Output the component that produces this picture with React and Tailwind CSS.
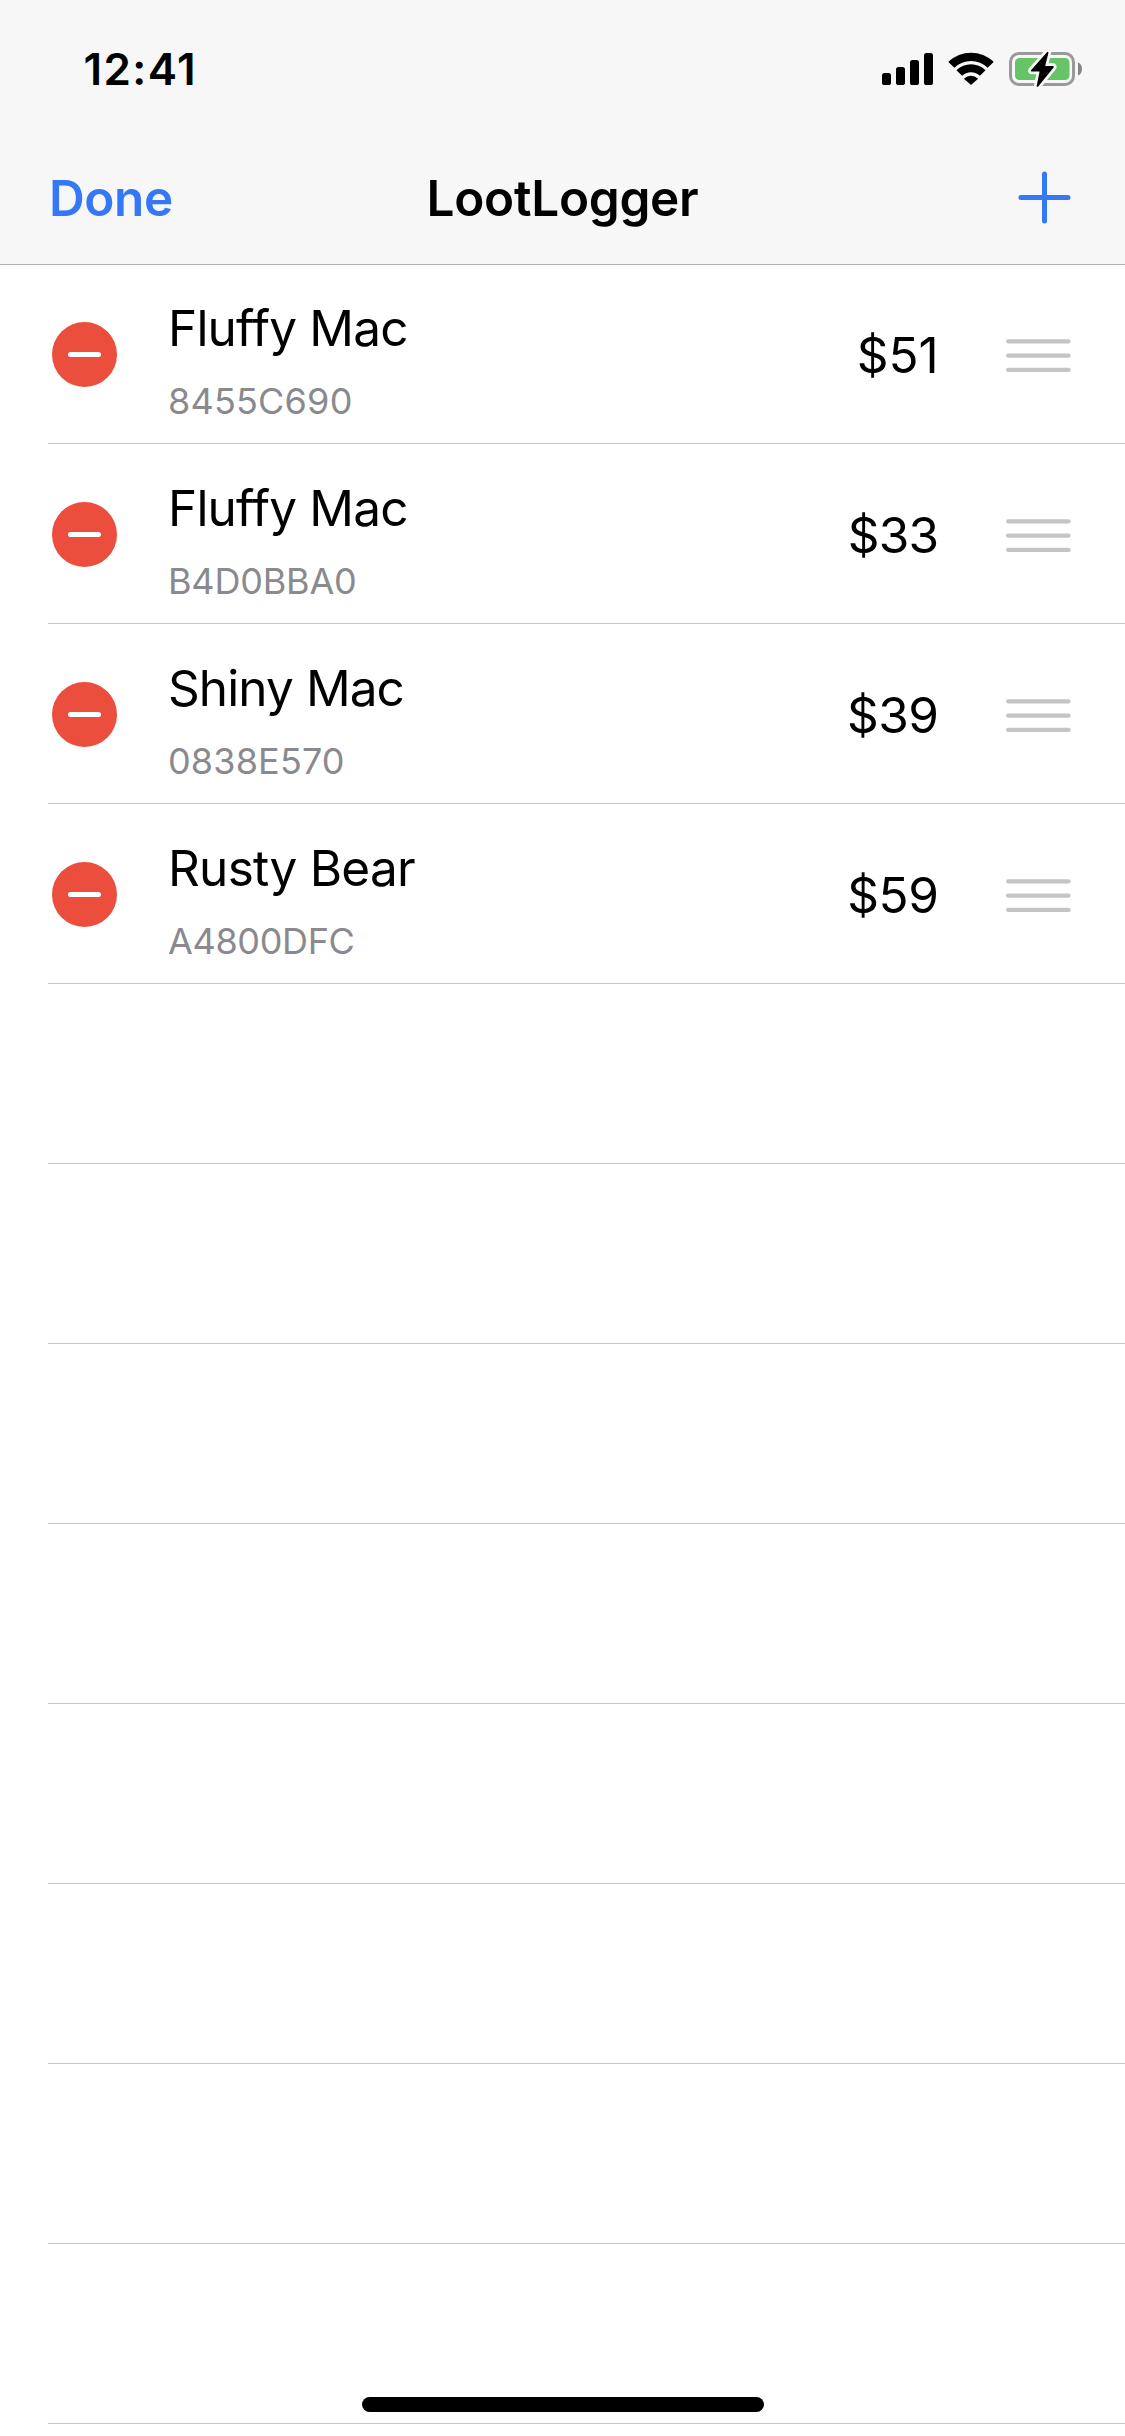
const items = [
  { name: "Fluffy Mac", nameTracking: "tracking-[-0.8px]", serial: "8455C690", serialTracking: "tracking-[0.2px]", value: "$51", valueTracking: "tracking-[-0.1px]" },
  { name: "Fluffy Mac", nameTracking: "tracking-[-0.8px]", serial: "B4D0BBA0", serialTracking: "tracking-[-0.2px]", value: "$33", valueTracking: "tracking-[-0.7px]" },
  { name: "Shiny Mac", nameTracking: "tracking-[-0.9px]", serial: "0838E570", serialTracking: "tracking-[0.15px]", value: "$39", valueTracking: "tracking-[-0.5px]" },
  { name: "Rusty Bear", nameTracking: "tracking-[-0.75px]", serial: "A4800DFC", serialTracking: "tracking-[-0.35px]", value: "$59", valueTracking: "tracking-[-0.45px]" },
];

const emptyRows = [1, 2, 3, 4, 5, 6, 7, 8];

function SignalIcon() {
  return (
    <svg width="51" height="32" viewBox="0 0 51 32" className="shrink-0">
      <rect x="0" y="20" width="9" height="12" rx="2.6" />
      <rect x="14" y="14" width="9" height="18" rx="2.6" />
      <rect x="28" y="7" width="9" height="25" rx="2.6" />
      <rect x="42" y="0" width="9" height="32" rx="2.6" />
    </svg>
  );
}

function WifiIcon() {
  return (
    <svg width="46" height="33" viewBox="0 0 46 33" className="shrink-0">
      <path d="M0.6 9.6 A32.5 32.5 0 0 1 45.4 9.6 L45.4 10.2 L39.6 15.8 A23.8 23.8 0 0 0 6.4 15.8 L0.6 10.2 Z" />
      <path d="M8.7 18.1 A20.6 20.6 0 0 1 37.3 18.1 L37.3 18.6 L31.9 23.7 A13 13 0 0 0 14.1 23.7 L8.7 18.6 Z" />
      <path d="M16.2 26.4 A10 10 0 0 1 29.8 26.4 L29.8 26.9 L23 33 L16.2 26.9 Z" />
    </svg>
  );
}

function BatteryIcon() {
  const bolt = "M47.2 52 L31 70.2 Q30.3 71.6 31.6 71.6 L39.6 71.6 L36.6 86.2 Q37.2 87.4 38.2 86.4 L53.6 67.6 Q54.3 66 53 66 L45.2 66 L48.4 53 Q48.4 51.4 47.2 52 Z";
  return (
    <svg width="76" height="40" viewBox="7 49 76 40" className="shrink-0">
      <rect x="10.5" y="53.5" width="63" height="31" rx="8.5" fill="none" stroke="#999999" strokeWidth="3" />
      <rect x="15" y="58" width="54.5" height="22" rx="4.5" fill="#65c466" />
      <path d="M78 62.2 Q82 64.2 82 68.9 Q82 73.6 78 75.6 Z" fill="#858585" />
      <path d={bolt} fill="#f7f7f7" stroke="#f7f7f7" strokeWidth="5.5" strokeLinejoin="round" />
      <path d={bolt} fill="#000" />
    </svg>
  );
}

function ReorderIcon() {
  return (
    <svg width="65" height="34" viewBox="0 0 65 34" fill="none" stroke="#c4c4c6" strokeWidth="4.2" strokeLinecap="round">
      <path d="M2.1 2.3 H62.6 M2.1 16.6 H62.6 M2.1 30.9 H62.6" />
    </svg>
  );
}

function StatusBar() {
  return (
    <div className="flex h-[138px] items-start justify-between pr-[42px] pl-[83.5px]">
      <span className="mt-[41px] text-[44px] leading-[56px] font-semibold tracking-[1.4px]">12:41</span>
      <div className="mt-[49px] flex items-start">
        <div className="mt-1">
          <SignalIcon />
        </div>
        <div className="mt-[3px] ml-[15px]">
          <WifiIcon />
        </div>
        <div className="ml-[13px]">
          <BatteryIcon />
        </div>
      </div>
    </div>
  );
}

function NavBar() {
  return (
    <div className="grid h-[126px] grid-cols-[1fr_auto_1fr] items-start pr-[54.5px] pl-[49px]">
      <button className="mt-[30px] justify-self-start text-[49.5px] leading-[60px] font-semibold tracking-[-0.4px] text-[#3478f6]">Done</button>
      <h1 className="mt-[30px] ml-[5.5px] text-[49.5px] leading-[60px] font-semibold tracking-[-0.3px]">LootLogger</h1>
      <button className="mt-[33px] justify-self-end">
        <svg width="53" height="53" viewBox="0 0 53 53" fill="none" stroke="#3478f6" strokeWidth="5" strokeLinecap="round">
          <path d="M26.5 3 V50 M3 26.5 H50" />
        </svg>
      </button>
    </div>
  );
}

function ItemRow({ item }) {
  return (
    <li className="ml-12 flex h-[180px] items-start border-b border-[#c6c6c8] pr-[54px]">
      <button className="mt-[58px] ml-1 flex size-[65px] items-center justify-center rounded-full bg-[#eb4e3d]">
        <span className="h-[5px] w-[33px] rounded-full bg-white" />
      </button>
      <div className="mt-[34px] ml-[51px] flex-1">
        <div className={`text-[49.5px] leading-[60px] ${item.nameTracking}`}>{item.name}</div>
        <div className={`mt-[21px] text-[36px] leading-[44px] text-[#8a8a8e] ${item.serialTracking}`}>{item.serial}</div>
      </div>
      <div className={`mt-[61px] text-[49.5px] leading-[60px] ${item.valueTracking}`}>{item.value}</div>
      <div className="mt-[75px] ml-[67.5px]">
        <ReorderIcon />
      </div>
    </li>
  );
}

export default function App() {
  return (
    <div className="relative h-[2436px] w-[1125px] overflow-hidden bg-white font-['Inter',sans-serif] text-black">
      <header className="relative h-[265px] border-b border-[#b2b2b2] bg-[#f7f7f7]">
        <StatusBar />
        <NavBar />
      </header>
      <ul className="-mt-px">
        {items.map((item) => (
          <ItemRow key={item.serial} item={item} />
        ))}
        {emptyRows.map((row) => (
          <li key={row} className="ml-12 h-[180px] border-b border-[#c6c6c8]" />
        ))}
      </ul>
      <div className="absolute bottom-6 left-[362px] h-[15px] w-[402px] rounded-full bg-black" />
    </div>
  );
}
